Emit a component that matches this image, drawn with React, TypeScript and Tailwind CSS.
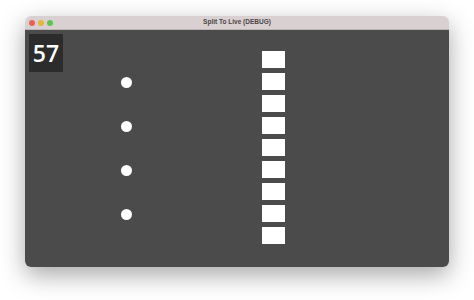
const App = () => {
  const dots = [0, 1, 2, 3];
  const blocks = [0, 1, 2, 3, 4, 5, 6, 7, 8];

  return (
    <div className="w-[474px] h-[300px] bg-white pt-[16px] pl-[25px] overflow-hidden font-['Liberation_Sans',Arial,sans-serif]">
      <div className="w-[424px] h-[251px] rounded-[6px] overflow-hidden shadow-[0_8px_24px_rgba(0,0,0,0.35)] flex flex-col">
        <div className="relative h-[14px] bg-[#d9d1d1] flex items-center justify-center border-b border-[#bdb6b6]">
          <div className="absolute left-[4px] top-[4px] flex gap-[3px]">
            <span className="w-[6px] h-[6px] rounded-full bg-[#ec5f57]" />
            <span className="w-[6px] h-[6px] rounded-full bg-[#e0b93a]" />
            <span className="w-[6px] h-[6px] rounded-full bg-[#5fc454]" />
          </div>
          <span className="text-[6.5px] font-bold text-[#4a4545] leading-none">Split To Live (DEBUG)</span>
        </div>
        <div className="flex-1 bg-[#4b4b4b] flex items-start">
          <div className="ml-[4px] mt-[4px] w-[34px] h-[38px] bg-[#2c2c2c] flex items-center justify-center">
            <span className="text-white text-[23px] leading-none font-semibold font-['Open_Sans',sans-serif]">57</span>
          </div>
          <div className="ml-[58px] mt-[47px] flex flex-col gap-[33px]">
            {dots.map((d) => (
              <div key={d} className="w-[11px] h-[11px] rounded-full bg-white" />
            ))}
          </div>
          <div className="ml-[130px] mt-[21px] flex flex-col gap-[5px]">
            {blocks.map((b) => (
              <div key={b} className="w-[23px] h-[17px] bg-white" />
            ))}
          </div>
        </div>
      </div>
    </div>
  );
};

export default App;
